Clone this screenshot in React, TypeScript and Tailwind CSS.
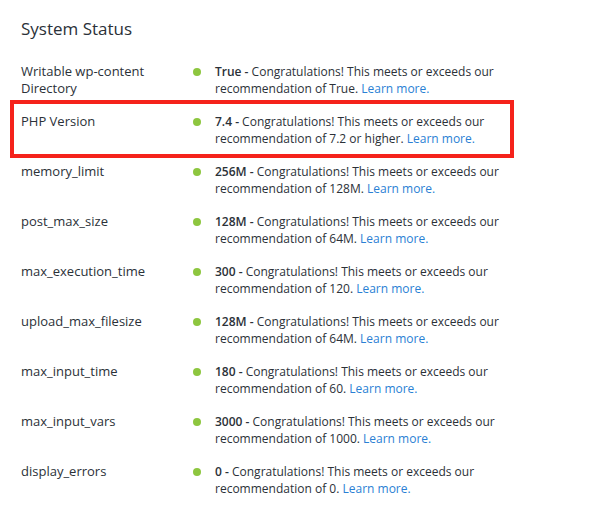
const rows = [
  { label: "Writable wp-content Directory", value: "True", rec: "True" },
  { label: "PHP Version", value: "7.4", rec: "7.2 or higher", highlight: true },
  { label: "memory_limit", value: "256M", rec: "128M" },
  { label: "post_max_size", value: "128M", rec: "64M" },
  { label: "max_execution_time", value: "300", rec: "120" },
  { label: "upload_max_filesize", value: "128M", rec: "64M" },
  { label: "max_input_time", value: "180", rec: "60" },
  { label: "max_input_vars", value: "3000", rec: "1000" },
  { label: "display_errors", value: "0", rec: "0" },
];

export default function App() {
  return (
    <div
      className="w-[600px] h-[508px] bg-white pl-[21px] pt-[17px] text-[#2b3138] overflow-hidden"
      style={{ fontFamily: '"Open Sans", "Noto Sans", sans-serif' }}
    >
      <h1 className="text-[17px] leading-[24px] font-normal">System Status</h1>

      <div className="mt-[22px] flex flex-col gap-4">
        {rows.map((row) => (
          <div key={row.label} className="relative flex leading-[17px]">
            {row.highlight && (
              <span className="pointer-events-none absolute left-[-11px] top-[-13px] w-[504px] h-[58px] border-[4px] border-[#f5221b]" />
            )}
            <div className="w-[172px] shrink-0 pr-4 text-[13px]">{row.label}</div>
            <div className="w-[22px] shrink-0 flex items-center h-[17px]">
              <span className="block w-2 h-2 rounded-full bg-[#8dc63f]" />
            </div>
            <p className="w-[290px] text-[12px]">
              <span className="font-semibold">{row.value} -</span> Congratulations! This meets or
              exceeds our recommendation of {row.rec}.{" "}
              <a href="#" className="text-[#2a7fd4]">
                Learn more.
              </a>
            </p>
          </div>
        ))}
      </div>
    </div>
  );
}
